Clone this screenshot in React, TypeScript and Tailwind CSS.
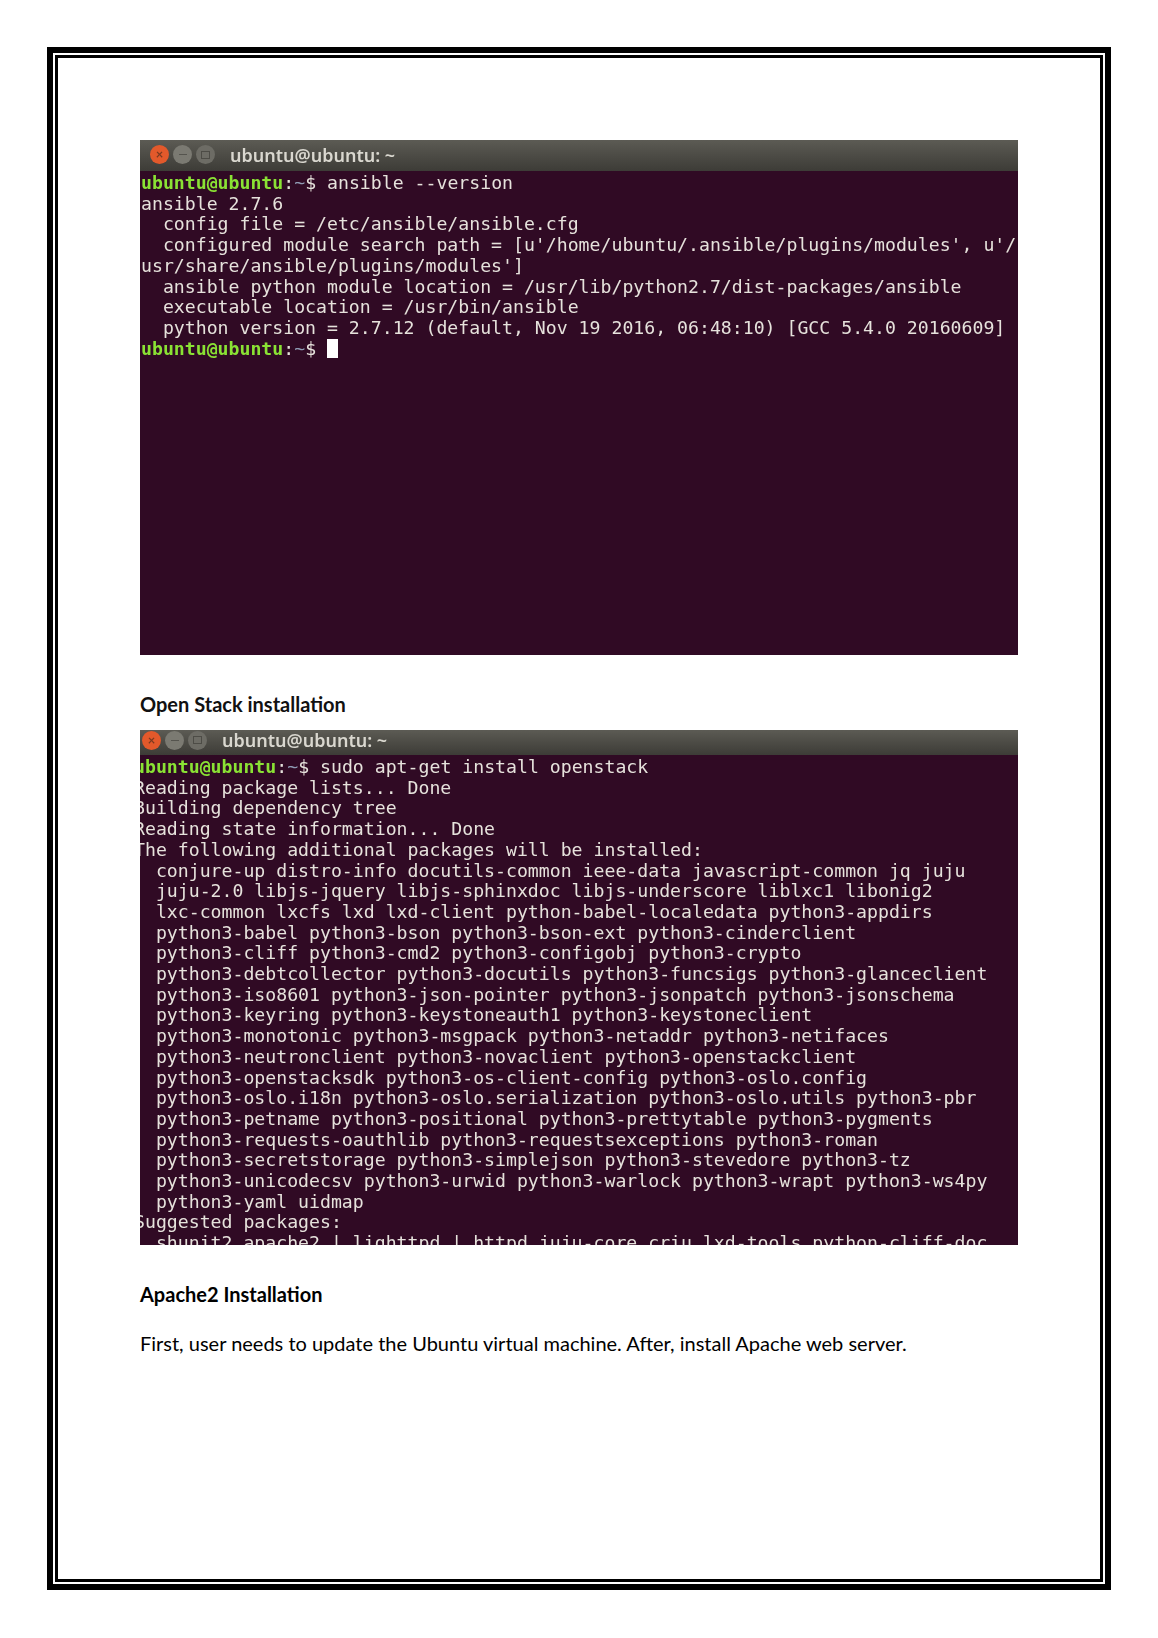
const t1 = [
  "ansible 2.7.6",
  "  config file = /etc/ansible/ansible.cfg",
  "  configured module search path = [u'/home/ubuntu/.ansible/plugins/modules', u'/",
  "usr/share/ansible/plugins/modules']",
  "  ansible python module location = /usr/lib/python2.7/dist-packages/ansible",
  "  executable location = /usr/bin/ansible",
  "  python version = 2.7.12 (default, Nov 19 2016, 06:48:10) [GCC 5.4.0 20160609]",
];
const t2 = [
  "Reading package lists... Done",
  "Building dependency tree",
  "Reading state information... Done",
  "The following additional packages will be installed:",
  "  conjure-up distro-info docutils-common ieee-data javascript-common jq juju",
  "  juju-2.0 libjs-jquery libjs-sphinxdoc libjs-underscore liblxc1 libonig2",
  "  lxc-common lxcfs lxd lxd-client python-babel-localedata python3-appdirs",
  "  python3-babel python3-bson python3-bson-ext python3-cinderclient",
  "  python3-cliff python3-cmd2 python3-configobj python3-crypto",
  "  python3-debtcollector python3-docutils python3-funcsigs python3-glanceclient",
  "  python3-iso8601 python3-json-pointer python3-jsonpatch python3-jsonschema",
  "  python3-keyring python3-keystoneauth1 python3-keystoneclient",
  "  python3-monotonic python3-msgpack python3-netaddr python3-netifaces",
  "  python3-neutronclient python3-novaclient python3-openstackclient",
  "  python3-openstacksdk python3-os-client-config python3-oslo.config",
  "  python3-oslo.i18n python3-oslo.serialization python3-oslo.utils python3-pbr",
  "  python3-petname python3-positional python3-prettytable python3-pygments",
  "  python3-requests-oauthlib python3-requestsexceptions python3-roman",
  "  python3-secretstorage python3-simplejson python3-stevedore python3-tz",
  "  python3-unicodecsv python3-urwid python3-warlock python3-wrapt python3-ws4py",
  "  python3-yaml uidmap",
  "Suggested packages:",
  "  shunit2 apache2 | lighttpd | httpd juju-core criu lxd-tools python-cliff-doc",
];

function Prompt() {
  return (
    <>
      <span className="font-bold text-[#8ae234]">ubuntu@ubuntu</span>
      <span>:</span>
      <span className="text-[#8f9bb3]">~</span>
      <span>$ </span>
    </>
  );
}

function TitleBar({ box }: { box: string }) {
  return (
    <div className={`flex shrink-0 items-center bg-gradient-to-b from-[#5c5b54] to-[#3d3c37] ${box}`}>
      <div className="flex items-center gap-[4px]">
        <span className="flex h-[19px] w-[19px] items-center justify-center rounded-full bg-[#e2592b] text-[13px] leading-none font-bold text-[#7a3a20]">
          ×
        </span>
        <span className="flex h-[19px] w-[19px] items-center justify-center rounded-full bg-[#7b7a72]">
          <span className="h-[1px] w-[8px] bg-[#55544e]" />
        </span>
        <span className="flex h-[19px] w-[19px] items-center justify-center rounded-full bg-[#6d6c65]">
          <span className="h-[8px] w-[9px] border border-[#4d4c46]" />
        </span>
      </div>
      <span className="ml-[15px] font-['Noto_Sans',sans-serif] text-[18px] leading-none font-semibold text-[#d9d7cf]">
        ubuntu@ubuntu: ~
      </span>
    </div>
  );
}

export default function App() {
  return (
    <div className="h-[1638px] w-[1158px] bg-white pt-[47px] pl-[47px]">
      <div className="h-[1543px] w-[1064px] border-[6px] border-black p-[2px]">
        <div className="h-full w-full border-[3px] border-black pt-[82px] pl-[82px] font-['Lato',sans-serif] text-[20px] text-[#111]">
          <div className="flex h-[515px] w-[878px] flex-col overflow-hidden bg-[#300a24] blur-[0.3px]">
            <TitleBar box="h-[31px] pl-[10px] pb-[2px]" />
            <pre className="ml-[1px] pt-[2px] font-['DejaVu_Sans_Mono',monospace] text-[18.18px] leading-[20.7px] font-medium text-[#e6e2dc]">
              <div><Prompt />ansible --version</div>
              {t1.map((l) => (
                <div key={l}>{l}</div>
              ))}
              <div className="flex items-center">
                <span className="whitespace-pre"><Prompt /></span>
                <span className="h-[19px] w-[11px] bg-white" />
              </div>
            </pre>
          </div>
          <p className="mt-[37px] h-[24px] leading-[24px] font-bold">Open Stack installation</p>
          <div className="mt-[14px] flex h-[515px] w-[878px] flex-col overflow-hidden bg-[#300a24] blur-[0.3px]">
            <TitleBar box="h-[25px] pl-[2px] pb-[5px]" />
            <pre className="ml-[-6px] pt-[2px] font-['DejaVu_Sans_Mono',monospace] text-[18.18px] leading-[20.7px] font-medium text-[#e6e2dc]">
              <div><Prompt />sudo apt-get install openstack</div>
              {t2.map((l) => (
                <div key={l}>{l}</div>
              ))}
            </pre>
          </div>
          <p className="mt-[37px] h-[24px] leading-[24px] font-bold text-black">Apache2 Installation</p>
          <p className="mt-[25px] h-[24px] leading-[24px] text-black">
            First, user needs to update the Ubuntu virtual machine. After, install Apache web server.
          </p>
        </div>
      </div>
    </div>
  );
}
